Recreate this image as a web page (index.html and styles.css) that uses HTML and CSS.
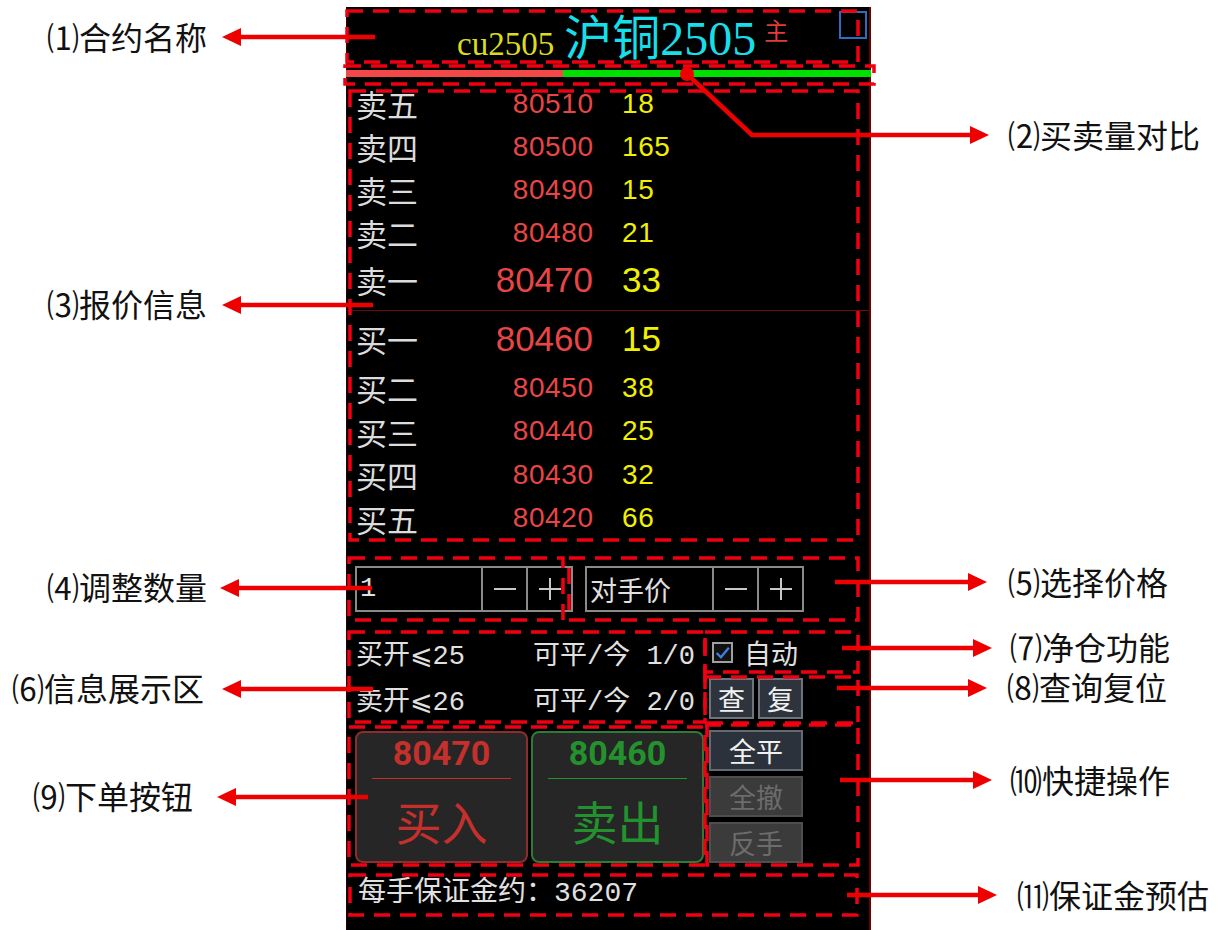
FILE: index.html
```html
<!DOCTYPE html>
<html lang="zh-CN">
<head>
<meta charset="utf-8">
<title>沪铜2505 下单面板</title>
<link rel="stylesheet" href="styles.css">
</head>
<body>
<div class="stage">
  <div class="panel">
    <header class="head">
      <div class="title">
        <span class="code">cu2505</span>
        <span class="name">沪铜2505</span>
        <span class="main">主</span>
      </div>
      <span class="corner"></span>
    </header>

    <svg class="ratio" width="525" height="7" viewBox="0 0 525 7" preserveAspectRatio="none">
      <rect class="ratio-buy" x="0" y="0" width="217" height="7"/>
      <rect class="ratio-sell" x="217" y="0" width="308" height="7"/>
    </svg>

    <div class="book">
      <div class="side sell">
        <div class="row"><span class="lbl">卖五</span><span class="px">80510</span><span class="vol">18</span></div>
        <div class="row"><span class="lbl">卖四</span><span class="px">80500</span><span class="vol">165</span></div>
        <div class="row"><span class="lbl">卖三</span><span class="px">80490</span><span class="vol">15</span></div>
        <div class="row"><span class="lbl">卖二</span><span class="px">80480</span><span class="vol">21</span></div>
        <div class="row big"><span class="lbl">卖一</span><span class="px">80470</span><span class="vol">33</span></div>
      </div>
      <div class="sep"></div>
      <div class="side buy">
        <div class="row big first"><span class="lbl">买一</span><span class="px">80460</span><span class="vol">15</span></div>
        <div class="row"><span class="lbl">买二</span><span class="px">80450</span><span class="vol">38</span></div>
        <div class="row"><span class="lbl">买三</span><span class="px">80440</span><span class="vol">25</span></div>
        <div class="row"><span class="lbl">买四</span><span class="px">80430</span><span class="vol">32</span></div>
        <div class="row"><span class="lbl">买五</span><span class="px">80420</span><span class="vol">66</span></div>
      </div>
    </div>

    <div class="controls">
      <div class="stepper">
        <span class="stepper-value">1</span>
        <span class="stepper-btn"><svg width="24" height="24" viewBox="0 0 24 24"><path d="M1 12H23" stroke="#c8c8c8" stroke-width="2"/></svg></span>
        <span class="stepper-btn"><svg width="24" height="24" viewBox="0 0 24 24"><path d="M1 12H23M12 1V23" stroke="#c8c8c8" stroke-width="2"/></svg></span>
      </div>
      <div class="stepper wide">
        <span class="stepper-value">对手价</span>
        <span class="stepper-btn"><svg width="24" height="24" viewBox="0 0 24 24"><path d="M1 12H23" stroke="#c8c8c8" stroke-width="2"/></svg></span>
        <span class="stepper-btn"><svg width="24" height="24" viewBox="0 0 24 24"><path d="M1 12H23M12 1V23" stroke="#c8c8c8" stroke-width="2"/></svg></span>
      </div>
    </div>

    <div class="info">
      <span>买开⩽25</span>
      <span>可平/今 1/0</span>
      <span class="auto"><span class="check"><svg width="17" height="17" viewBox="0 0 16 16"><path d="M2.5 8.5L6.5 12.5L14 3.5" fill="none" stroke="#3f7fe0" stroke-width="2.2"/></svg></span>自动</span>
      <span>卖开⩽26</span>
      <span>可平/今 2/0</span>
      <span class="qbtns"><span class="qbtn">查</span><span class="qbtn">复</span></span>
    </div>

    <div class="trade">
      <div class="order buy-order">
        <span class="order-price">80470</span>
        <span class="order-rule"></span>
        <span class="order-word">买入</span>
      </div>
      <div class="order sell-order">
        <span class="order-price">80460</span>
        <span class="order-rule"></span>
        <span class="order-word">卖出</span>
      </div>
      <div class="quick">
        <span class="quick-btn on">全平</span>
        <span class="quick-btn off">全撤</span>
        <span class="quick-btn off">反手</span>
      </div>
    </div>

    <div class="margin">每手保证金约：36207</div>
  </div>

  <svg class="notes" width="1218" height="930" viewBox="0 0 1218 930">
    <g class="boxes">
      <rect x="347" y="11" width="511" height="51"/>
      <rect x="345" y="66" width="529" height="18"/>
      <rect x="350" y="91" width="508" height="449"/>
      <rect x="349" y="558" width="214" height="62"/>
      <rect x="569" y="558" width="289" height="62"/>
      <rect x="349" y="632" width="356" height="90"/>
      <rect x="705" y="632" width="153" height="40"/>
      <rect x="705" y="677" width="153" height="48"/>
      <rect x="349" y="727" width="356" height="138"/>
      <rect x="707" y="723" width="151" height="142"/>
      <rect x="350" y="875" width="507" height="40"/>
    </g>
    <g class="arrows">
      <line x1="238" y1="37" x2="375" y2="37"/>
      <line x1="238" y1="305" x2="373" y2="305"/>
      <line x1="238" y1="588" x2="372" y2="588"/>
      <line x1="238" y1="689" x2="373" y2="689"/>
      <line x1="233" y1="797" x2="368" y2="797"/>
      <polyline points="687,74 752,135 972,135"/>
      <line x1="835" y1="582" x2="970" y2="582"/>
      <line x1="842" y1="648" x2="975" y2="648"/>
      <line x1="837" y1="688" x2="970" y2="688"/>
      <line x1="840" y1="780" x2="975" y2="780"/>
      <line x1="847" y1="895" x2="980" y2="895"/>
    </g>
    <g class="heads">
      <circle cx="687" cy="74" r="7"/>
      <polygon points="222,37 241,28 241,46"/>
      <polygon points="222,305 241,296 241,314"/>
      <polygon points="220,588 239,579 239,597"/>
      <polygon points="222,689 241,680 241,698"/>
      <polygon points="217,797 236,788 236,806"/>
      <polygon points="989,135 970,126 970,144"/>
      <polygon points="987,582 968,573 968,591"/>
      <polygon points="992,648 973,639 973,657"/>
      <polygon points="987,688 968,679 968,697"/>
      <polygon points="992,780 973,771 973,789"/>
      <polygon points="997,895 978,886 978,904"/>
    </g>
  </svg>

  <div class="callout c1">⑴合约名称</div>
  <div class="callout c3">⑶报价信息</div>
  <div class="callout c4">⑷调整数量</div>
  <div class="callout c6">⑹信息展示区</div>
  <div class="callout c9">⑼下单按钮</div>
  <div class="callout c2">⑵买卖量对比</div>
  <div class="callout c5">⑸选择价格</div>
  <div class="callout c7">⑺净仓功能</div>
  <div class="callout c8">⑻查询复位</div>
  <div class="callout c10">⑽快捷操作</div>
  <div class="callout c11">⑾保证金预估</div>
</div>
</body>
</html>
```

FILE: styles.css
```css
* { box-sizing: border-box; margin: 0; padding: 0; }

html, body {
  width: 1218px;
  height: 930px;
  overflow: hidden;
  background: #ffffff;
}

body {
  font-family: "Noto Sans CJK SC", sans-serif;
}

.stage {
  position: relative;
  width: 1218px;
  height: 930px;
  display: flex;
  padding-left: 346px;
  padding-top: 7px;
}

/* ---------- panel ---------- */
.panel {
  width: 525px;
  height: 923px;
  background: #000;
  border-left: 1px solid #2a0000;
  border-right: 2px solid #6a0000;
  display: flex;
  flex-direction: column;
}

.head {
  height: 60px;
  flex: 0 0 60px;
  display: flex;
  align-items: flex-start;
  padding-left: 110px;
}

.title {
  display: flex;
  align-items: baseline;
  margin-top: 8px;
  line-height: 48px;
}

.code {
  font-family: "Liberation Serif", serif;
  font-size: 33px;
  color: #dcdc1e;
  margin-right: 10px;
}

.name {
  font-family: "Liberation Serif", "Noto Sans CJK SC", serif;
  font-size: 48px;
  color: #16dfea;
}

.main {
  align-self: flex-start;
  font-size: 24px;
  line-height: 24px;
  color: #e03c3c;
  margin-left: 8px;
  margin-top: 3px;
}

.corner {
  margin-left: auto;
  margin-right: 2px;
  margin-top: 4px;
  width: 28px;
  height: 28px;
  border: 2px solid #2d6cc0;
}

/* buy/sell volume ratio bar */
.ratio {
  display: block;
  flex: 0 0 7px;
  width: 525px;
  height: 7px;
  margin-top: 3px;
  margin-left: -1px;
}

.ratio-buy { fill: #f24848; }
.ratio-sell { fill: #00e000; }

/* ---------- order book ---------- */
.book { padding-top: 5px; }

.row {
  display: grid;
  grid-template-columns: 130px 107px auto;
  align-items: center;
  height: 43px;
  padding-left: 9px;
}

.buy .row { height: 43.5px; }
.row.big { height: 52px; }
.buy .row.big { height: 55px; }

.lbl {
  font-size: 31px;
  line-height: 1.2;
  color: #dcdcdc;
}

.px {
  justify-self: end;
  margin-right: -0.6px;
  font-family: "Liberation Sans", sans-serif;
  font-size: 28px;
  letter-spacing: 0.6px;
  color: #e84646;
}

.vol {
  padding-left: 29px;
  font-family: "Liberation Sans", sans-serif;
  font-size: 28px;
  letter-spacing: 0.6px;
  color: #f0f000;
}

.row.big .px,
.row.big .vol {
  font-size: 35px;
  letter-spacing: 0;
  margin-right: 0;
}

.sep {
  height: 1px;
  margin-top: 4px;
  background: #6b0c0c;
}

/* ---------- steppers ---------- */
.controls {
  display: flex;
  gap: 12px;
  margin-top: 26px;
  padding-left: 8px;
}

.stepper {
  width: 218px;
  height: 46px;
  border: 2px solid #8a8a8a;
  display: grid;
  grid-template-columns: 1fr 45px 45px;
}

.stepper.wide { width: 219px; }

.stepper-value {
  display: flex;
  align-items: center;
  padding-left: 3px;
  font-family: "Liberation Mono", "Noto Sans CJK SC", monospace;
  font-size: 27px;
  color: #e0e0e0;
}

.stepper-btn {
  border-left: 2px solid #8a8a8a;
  display: flex;
  align-items: center;
  justify-content: center;
}

/* ---------- info ---------- */
.info {
  margin-top: 17px;
  padding-left: 9px;
  display: grid;
  grid-template-columns: 177px 176px auto;
  grid-template-rows: 46px 46px;
  align-items: center;
  font-family: "Liberation Mono", "Noto Sans CJK SC", "DejaVu Sans", monospace;
  font-size: 27px;
  color: #e0e0e0;
  white-space: nowrap;
}

.auto {
  display: flex;
  align-items: center;
  gap: 11px;
}

.check {
  width: 21px;
  height: 21px;
  margin-left: 3px;
  border: 2px solid #a0a0a0;
  background: #111;
  display: flex;
  align-items: center;
  justify-content: center;
}

.qbtns {
  display: flex;
  gap: 4px;
}

.qbtn {
  width: 45px;
  height: 41px;
  background: #2e343e;
  border: 2px solid #6f747c;
  color: #f0f0f0;
  display: flex;
  align-items: center;
  justify-content: center;
}

/* ---------- trade ---------- */
.trade {
  margin-top: 10px;
  padding-left: 8px;
  display: grid;
  grid-template-columns: 173px 173px 96px;
  column-gap: 3px;
  height: 132px;
}

.order {
  border: 2px solid #8f2a2a;
  border-radius: 8px;
  background: #262626;
  display: flex;
  flex-direction: column;
  align-items: center;
}

.buy-order { color: #c4302b; border-color: #8f2c2c; }
.sell-order { color: #23922e; border-color: #2a7d32; }

.order-price {
  margin-top: 3px;
  font-family: Roboto, "Liberation Sans", sans-serif;
  font-weight: bold;
  font-size: 34px;
  line-height: 34px;
}

.order-rule {
  width: 139px;
  height: 1px;
  margin-top: 8px;
  background: currentColor;
}

.order-word {
  margin-top: 18px;
  font-size: 46px;
  line-height: 1;
}

.quick {
  margin-left: 2px;
  margin-top: -1px;
  display: flex;
  flex-direction: column;
  gap: 5px;
}

.quick-btn {
  height: 41px;
  border: 2px solid #555;
  display: flex;
  align-items: center;
  justify-content: center;
  font-size: 27px;
}

.quick-btn.on {
  background: #2b323b;
  border-color: #646a72;
  color: #f2f2f2;
}

.quick-btn.off {
  background: #3b3b3b;
  border-color: #4e4e4e;
  color: #6c6c6c;
}

.margin {
  margin-top: 11px;
  padding-left: 11px;
  font-family: "Liberation Mono", "Noto Sans CJK SC", monospace;
  font-size: 28px;
  line-height: 40px;
  color: #e0e0e0;
  white-space: nowrap;
}

/* ---------- annotation layer ---------- */
.notes {
  position: absolute;
  left: 0;
  top: 0;
  pointer-events: none;
}

.boxes rect {
  fill: none;
  stroke: #f00010;
  stroke-width: 3.5;
  stroke-dasharray: 16 10;
}

.arrows line,
.arrows polyline {
  fill: none;
  stroke: #ee0000;
  stroke-width: 4.5;
}

.heads circle,
.heads polygon {
  fill: #ee0000;
}

.callout {
  position: absolute;
  height: 32px;
  font-family: "Liberation Sans", "Noto Sans CJK SC", sans-serif;
  font-size: 32px;
  line-height: 32px;
  color: #111;
  white-space: nowrap;
}

.c1 { left: 47px; top: 23px; }
.c3 { left: 47px; top: 290px; }
.c4 { left: 47px; top: 573px; }
.c6 { left: 12px; top: 674px; }
.c9 { left: 33px; top: 782px; }
.c2 { left: 1008px; top: 121px; }
.c5 { left: 1008px; top: 568px; }
.c7 { left: 1010px; top: 633px; }
.c8 { left: 1007px; top: 673px; }
.c10 { left: 1010px; top: 766px; }
.c11 { left: 1017px; top: 881px; }
```
